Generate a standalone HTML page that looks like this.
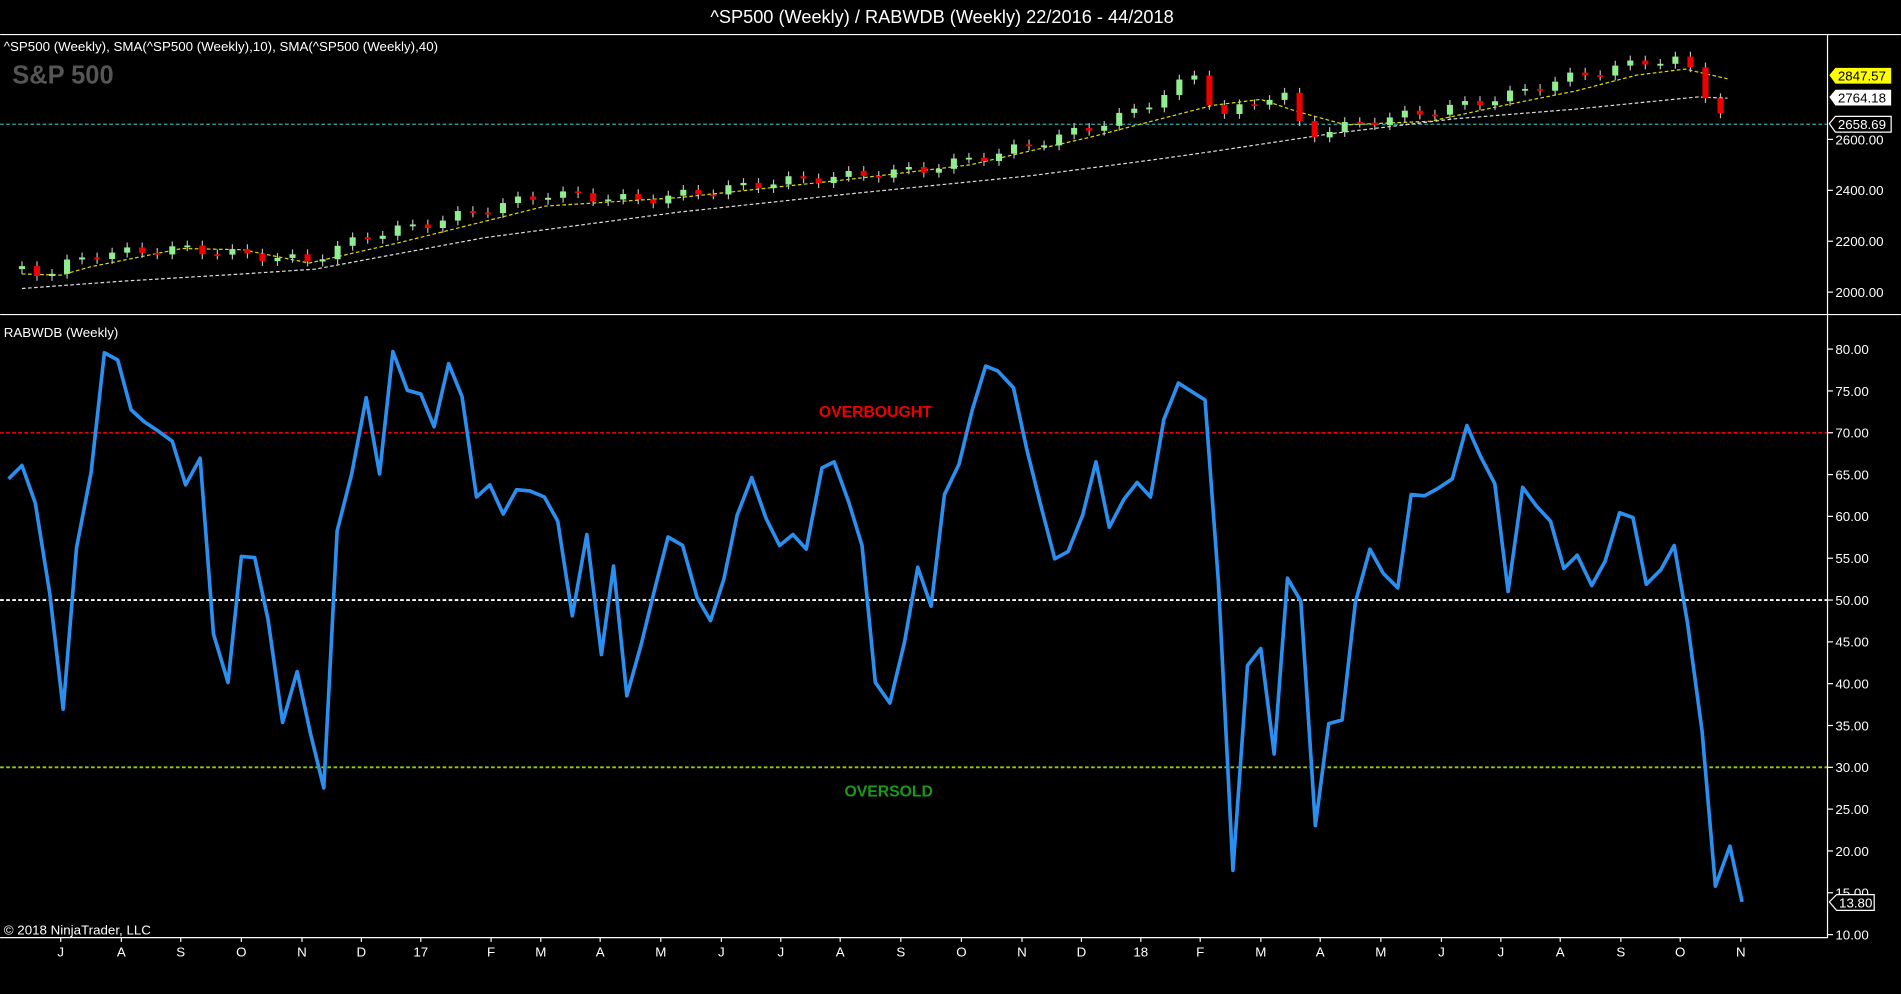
<!DOCTYPE html>
<html><head><meta charset="utf-8"><style>
html,body{margin:0;padding:0;background:#000;width:1901px;height:994px;overflow:hidden}
svg{display:block}
text{font-family:"Liberation Sans",Arial,sans-serif}
</style></head><body>
<svg id="s" width="1901" height="994" viewBox="0 0 1568 820" xmlns="http://www.w3.org/2000/svg">
<rect width="1568" height="820" fill="#000"/>
<text x="777" y="19" fill="#fff" font-size="15" text-anchor="middle">^SP500 (Weekly) / RABWDB (Weekly)  22/2016 - 44/2018</text>
<line x1="0" y1="28.5" x2="1568" y2="28.5" stroke="#fff"/>
<line x1="0" y1="259.5" x2="1568" y2="259.5" stroke="#fff"/>
<line x1="1507.5" y1="28" x2="1507.5" y2="774" stroke="#fff"/>
<line x1="0" y1="773.5" x2="1507" y2="773.5" stroke="#fff"/>
<text x="3" y="42" fill="#fff" font-size="11">^SP500 (Weekly),  SMA(^SP500 (Weekly),10),  SMA(^SP500 (Weekly),40)</text>
<text x="10" y="69" fill="#555" font-size="21" font-weight="bold">S&amp;P 500</text>
<text x="3" y="278" fill="#fff" font-size="11">RABWDB (Weekly)</text>
<line x1="0" y1="102.5" x2="1507" y2="102.5" stroke="#3aa" stroke-dasharray="3,2"/>
<polyline fill="none" stroke="#ddd" stroke-width="1" stroke-dasharray="3,2" points="18,238 100,232 200,226 260,222 400,196 560,175 700,160 850,145 950,132 1000,125 1100,110 1200,98 1300,90 1400,80 1425,81"/>
<polyline fill="none" stroke="#dd0" stroke-width="1" stroke-dasharray="3,2" points="18,226 50,227 75,220 150,205 200,206 255,217 330,200 450,170 560,163 700,148 800,136 900,113 950,100 1000,87 1040,82 1070,92 1110,103 1180,100 1240,87 1300,75 1350,62 1390,57 1425,65"/>
<g id="candles"></g>
<g fill="#fff" font-size="11">
<text x="1514" y="245">2000.00</text><text x="1514" y="203">2200.00</text><text x="1514" y="161">2400.00</text><text x="1514" y="119">2600.00</text>
</g>
<g stroke="#fff"><line x1="1507" y1="241" x2="1512" y2="241"/><line x1="1507" y1="199" x2="1512" y2="199"/><line x1="1507" y1="157" x2="1512" y2="157"/><line x1="1507" y1="115" x2="1512" y2="115"/></g>
<polygon points="1509,62 1514,56 1560,56 1560,69 1514,69" fill="#ff0"/>
<text x="1516" y="66.5" font-size="11" fill="#000">2847.57</text>
<polygon points="1509,80 1514,74 1560,74 1560,87 1514,87" fill="#fff"/>
<text x="1516" y="84.5" font-size="11" fill="#000">2764.18</text>
<polygon points="1509,102 1514,96 1560,96 1560,109 1514,109" fill="#000" stroke="#fff"/>
<text x="1516" y="106.5" font-size="11" fill="#fff">2658.69</text>
<line x1="0" y1="357" x2="1507" y2="357" stroke="#e00" stroke-width="1.5" stroke-dasharray="3,2"/>
<line x1="0" y1="495" x2="1507" y2="495" stroke="#fff" stroke-width="1.5" stroke-dasharray="3,2"/>
<line x1="0" y1="633" x2="1507" y2="633" stroke="#9c0" stroke-width="1.5" stroke-dasharray="3,2"/>
<text x="722" y="344" fill="#e00" font-size="13" font-weight="bold" text-anchor="middle">OVERBOUGHT</text>
<text x="733" y="657" fill="#1a9a1a" font-size="13" font-weight="bold" text-anchor="middle">OVERSOLD</text>
<g id="iax" fill="#fff" font-size="11"></g>
<polyline fill="none" stroke="#2a8fef" stroke-width="3" stroke-linejoin="round" points="7,395 18,384 29,415 41,490 52,585 63,452 75,390 86,291 97,297 108,338 119,348 131,356 142,364 153,400 165,378 176,523 188,563 199,459 210,460 221,511 233,596 245,554 256,605 267,650 278,438 290,391 302,328 313,391 324,290 336,322 347,325 358,352 370,300 381,327 393,410 404,400 415,424 426,404 437,405 449,410 460,430 472,508 484,441 496,540 506,467 517,574 529,531 540,486 551,443 563,450 575,493 586,512 597,478 608,425 620,394 632,428 643,450 654,441 665,453 678,386 688,381 700,414 711,450 722,563 734,580 746,530 757,468 768,500 779,408 791,383 802,338 813,302 823,306 836,320 847,371 858,415 870,461 881,455 893,425 904,381 915,435 927,412 938,398 949,410 960,346 972,316 983,323 994,330 1005,480 1017,718 1029,549 1040,535 1051,622 1062,477 1073,496 1085,681 1096,597 1107,594 1118,497 1130,453 1141,473 1153,485 1164,408 1175,409 1186,403 1198,395 1210,351 1221,376 1233,399 1244,488 1256,402 1267,417 1279,430 1290,469 1301,458 1313,483 1324,463 1336,423 1347,427 1358,482 1370,470 1381,450 1392,514 1404,603 1415,731 1427,698 1437,744"/>
<polygon points="1509,744 1515,738 1546,738 1546,751 1515,751" fill="#000" stroke="#fff"/>
<text x="1517" y="748.5" font-size="11" fill="#fff">13.80</text>
<text x="3" y="771" fill="#fff" font-size="11">© 2018 NinjaTrader, LLC</text>
<g id="xax" fill="#fff" font-size="11" text-anchor="middle"></g>
</svg>
<script>
(function(){
var NS="http://www.w3.org/2000/svg";
function el(p,t,a,txt){var e=document.createElementNS(NS,t);for(var k in a)e.setAttribute(k,String(a[k]));if(txt)e.textContent=txt;p.appendChild(e);return e;}
var iax=document.getElementById('iax');
for(var v=80;v>=10;v-=5){var y=288+(80-v)*6.9;el(iax,'text',{x:1514,y:y+4},v.toFixed(2));el(iax,'line',{x1:1507,y1:y,x2:1512,y2:y,stroke:'#fff'});}
var xax=document.getElementById('xax');
var m=[[50,'J'],[100,'A'],[149,'S'],[199,'O'],[249,'N'],[298,'D'],[347,'17'],[405,'F'],[446,'M'],[495,'A'],[545,'M'],[595,'J'],[644,'J'],[693,'A'],[743,'S'],[793,'O'],[843,'N'],[892,'D'],[941,'18'],[990,'F'],[1040,'M'],[1089,'A'],[1139,'M'],[1189,'J'],[1238,'J'],[1287,'A'],[1337,'S'],[1386,'O'],[1436,'N']];
m.forEach(function(a){el(xax,'text',{x:a[0],y:789},a[1]);el(xax,'line',{x1:a[0],y1:773,x2:a[0],y2:777,stroke:'#fff'});});
var P=[[18,222],[40,226],[50,220],[75,210],[150,205],[200,210],[255,215],[300,195],[350,185],[450,160],[530,165],[640,150],[700,145],[760,140],[830,125],[900,105],[940,90],[985,62],[995,80],[1010,95],[1050,78],[1065,80],[1075,112],[1130,100],[1190,90],[1240,80],[1290,65],[1360,50],[1390,50],[1405,75],[1425,100]];
function py(x){for(var i=1;i<P.length;i++){if(x<=P[i][0]){var a=P[i-1],b=P[i];return a[1]+(b[1]-a[1])*(x-a[0])/(b[0]-a[0]);}}return P[P.length-1][1];}
var c=document.getElementById('candles');var prev=py(18);var s=7;
for(var x=18;x<=1426;x+=12.4){var cl=py(x)+Math.sin(s++*1.7)*4;var o=prev;var tp=Math.min(o,cl),bt=Math.max(o,cl);var h=Math.max(bt-tp,1.5);var up=cl<o;
el(c,'line',{x1:x,y1:tp-4,x2:x,y2:bt+4,stroke:'#bbb','stroke-width':1});
el(c,'rect',{x:x-2.5,y:tp,width:5,height:h,fill:up?'#90ee90':'#e00'});prev=cl;}
})();
</script>
</body></html>
